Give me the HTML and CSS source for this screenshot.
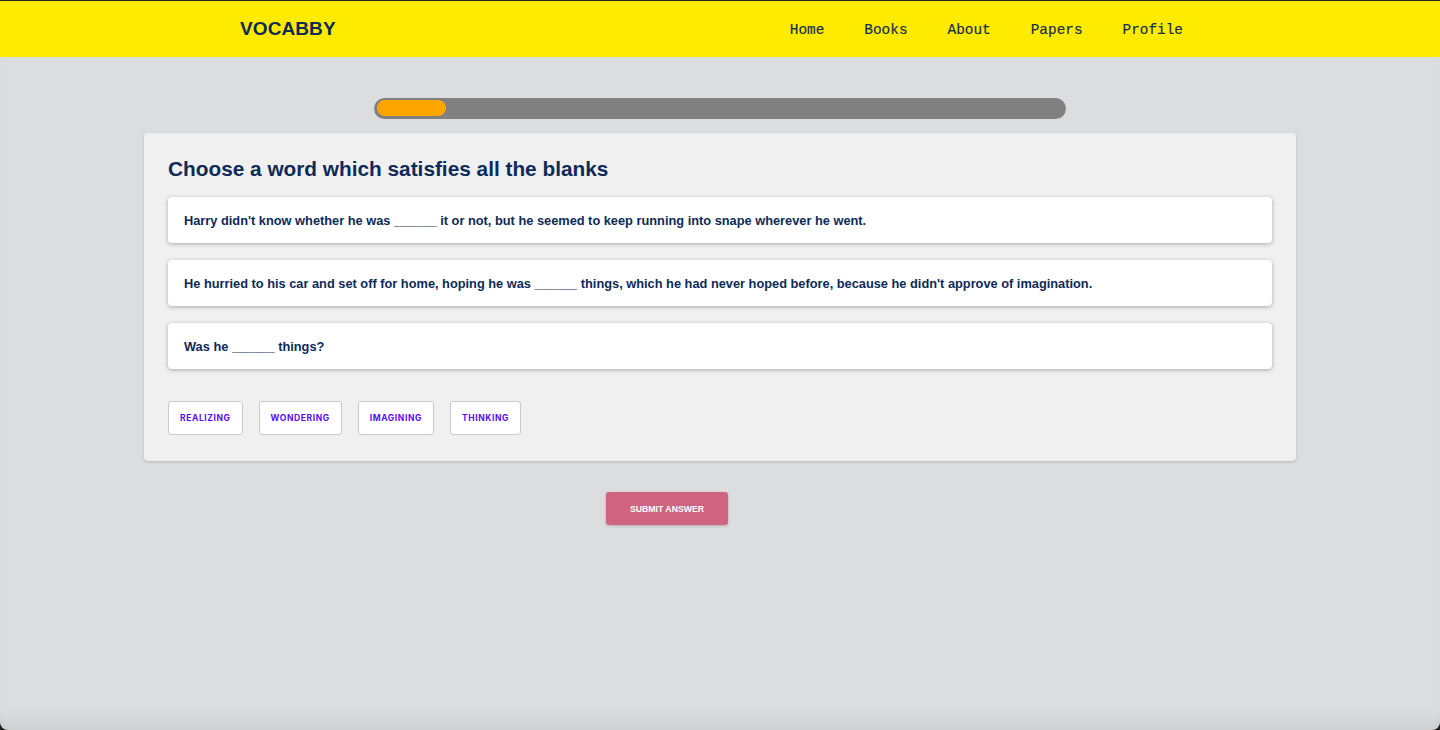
FILE: index.html
```html
<!DOCTYPE html>
<html lang="en">
<head>
<meta charset="utf-8">
<title>Vocabby</title>
<link rel="stylesheet" href="styles.css">
</head>
<body>
<div class="window">
  <header class="topbar">
    <div class="topbar-inner">
      <div class="logo">VOCABBY</div>
      <nav class="nav">
        <a href="#">Home</a>
        <a href="#">Books</a>
        <a href="#">About</a>
        <a href="#">Papers</a>
        <a href="#">Profile</a>
      </nav>
    </div>
  </header>
  <main class="main">
    <div class="progress"><div class="progress-fill" style="width:69px"></div></div>
    <section class="card">
      <h2 class="card-title">Choose a word which satisfies all the blanks</h2>
      <div class="sentence">Harry didn't know whether he was ______ it or not, but he seemed to keep running into snape wherever he went.</div>
      <div class="sentence">He hurried to his car and set off for home, hoping he was ______ things, which he had never hoped before, because he didn't approve of imagination.</div>
      <div class="sentence">Was he ______ things?</div>
      <div class="options">
        <button class="option">Realizing</button>
        <button class="option">Wondering</button>
        <button class="option">Imagining</button>
        <button class="option">Thinking</button>
      </div>
    </section>
    <button class="submit">Submit Answer</button>
  </main>
</div>
</body>
</html>
```

FILE: styles.css
```css
* { box-sizing: border-box; }
html, body { margin: 0; padding: 0; }
body {
  background: #222;
  font-family: "Liberation Sans", Arial, sans-serif;
}
.window {
  height: 730px;
  border-top: 1px solid #262626;
  background: #dcdddf;
  border-radius: 0 0 8px 8px;
  overflow: hidden;
  box-shadow: inset 0 -22px 20px -14px rgba(0,0,0,0.07);
}
.topbar {
  background: #ffeb00;
  height: 56px;
}
.topbar-inner {
  width: 960px;
  margin: 0 auto;
  height: 100%;
  display: flex;
  align-items: center;
  justify-content: space-between;
}
.logo {
  font-weight: 700;
  font-size: 19px;
  color: #0e2a57;
  letter-spacing: 0.1px;
}
.nav {
  display: flex;
  gap: 40px;
  padding-right: 17px;
  padding-top: 2px;
}
.nav a {
  font-family: "Liberation Mono", "Courier New", monospace;
  font-size: 14.4px;
  color: #1a2c50;
  text-decoration: none;
  -webkit-text-stroke: 0.2px #1a2c50;
}
.main {
  display: flex;
  flex-direction: column;
  align-items: center;
  padding-top: 41px;
}
.progress {
  width: 692px;
  height: 21px;
  background: #808080;
  border-radius: 11px;
  padding: 2px 3px 3px 3px;
}
.progress-fill {
  height: 16px;
  background: #ffa500;
  border-radius: 8px;
}
.card {
  width: 1152px;
  margin-top: 14px;
  background: #f0f0f0;
  border-radius: 4px;
  box-shadow: 0 1px 3px rgba(0,0,0,0.18);
  padding: 24px 24px 26px;
}
.card-title {
  margin: 0 0 17px;
  font-size: 20.8px;
  line-height: 23px;
  font-weight: 700;
  color: #0e2a57;
}
.sentence {
  background: #fff;
  border-radius: 4px;
  box-shadow: 0 1px 4px rgba(0,0,0,0.3);
  padding: 16px 16px 14px;
  line-height: 16px;
  font-size: 12.8px;
  font-weight: 700;
  color: #0e2a57;
  margin-bottom: 17px;
}
.sentence:last-of-type { margin-bottom: 0; }
.options {
  display: flex;
  gap: 16px;
  margin-top: 32px;
}
.option {
  height: 34px;
  padding: 0 11px;
  background: #fff;
  border: 1px solid #c9c9cb;
  border-radius: 3px;
  font-family: Inter, "Noto Sans", sans-serif;
  font-size: 8.5px;
  font-weight: 700;
  letter-spacing: 0.6px;
  text-transform: uppercase;
  color: #5a0cff;
}
.submit {
  margin-top: 31px;
  margin-right: 106px;
  width: 122px;
  height: 33px;
  background: #d0637f;
  border: none;
  border-radius: 3px;
  box-shadow: 0 1px 3px rgba(0,0,0,0.2);
  color: #fff;
  font-family: "Liberation Sans", Arial, sans-serif;
  font-size: 8.7px;
  font-weight: 700;
  text-transform: uppercase;
}
```
